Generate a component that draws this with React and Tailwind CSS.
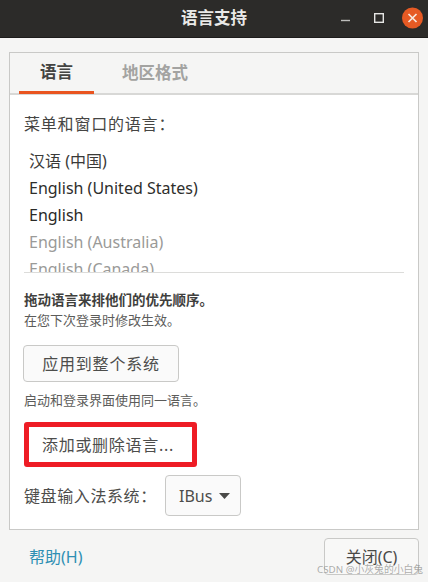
import React from 'react';

const FONT = "font-['Noto_Sans','Noto_Sans_CJK_SC',sans-serif]";

const languages = [
    { name: '汉语 (中国)', cls: 'text-[#3a3a38]' },
    { name: 'English (United States)', cls: 'text-[#2e2e2c]' },
    { name: 'English', cls: 'text-[#2a2a28]' },
    { name: 'English (Australia)', cls: 'text-[#9a9a98]' },
    { name: 'English (Canada)', cls: 'text-[#9a9a98]' },
];

const App = () => {
    return (
        <div className={`${FONT} relative w-[428px] h-[582px] overflow-hidden bg-[#f5f5f4] flex flex-col text-[#4a4a48]`}>
            {/* 타이틀바 */}
            <header className="relative h-[38px] shrink-0 bg-[#2c2b29] border-b border-[#1d1c1b] flex items-center justify-center">
                <span className="text-[16.5px] font-bold text-[#e9e9e7] leading-none">语言支持</span>
                <div className="absolute left-[332px] top-0 h-full">
                    <svg width="96" height="38" viewBox="0 0 96 38">
                        <path d="M9 20.5h9" stroke="#bdbdbb" strokeWidth="1.4" />
                        <rect x="42.7" y="13.7" width="8.6" height="8.6" fill="none" stroke="#e6e6e4" strokeWidth="1.4" />
                        <circle cx="80.5" cy="18" r="10.5" fill="#e65a24" />
                        <path d="M76.5 14l8 8M84.5 14l-8 8" stroke="#f7e9e0" strokeWidth="1.7" />
                    </svg>
                </div>
            </header>

            {/* 노트북 프레임 */}
            <div className="mt-[14px] ml-[9px] w-[410px] h-[478px] shrink-0 border border-[#c9c9c7] bg-white flex flex-col">
                <div className="h-[42px] shrink-0 bg-[#f5f5f4] border-b-[2px] border-[#d8d8d6] flex pl-[9px]">
                    <div className="w-[75px] h-[41px] border-b-[3px] border-[#e9541f] flex items-center justify-center text-[16.5px] font-bold text-[#444442]">
                        语言
                    </div>
                    <div className="ml-[28px] h-[40px] flex items-center text-[16.5px] font-bold text-[#a3a3a1]">
                        地区格式
                    </div>
                </div>

                <div className="flex-1 flex flex-col pl-[13px]">
                    <div className="mt-[17px] ml-[1px] h-[24px] flex items-center text-[16px] tracking-[0.8px] text-[#454543]">
                        菜单和窗口的语言：
                    </div>

                    <div className="mt-[11px] ml-[1px] w-[380px] h-[126px] overflow-hidden border-b-[1.5px] border-[#dcdcda] pl-[5px]">
                        {languages.map((lang, i) => (
                            <div key={i} className={`h-[27px] flex items-center whitespace-nowrap text-[16px] ${lang.cls}`}>
                                {lang.name}
                            </div>
                        ))}
                    </div>

                    <div className="mt-[17px] ml-[1px] h-[20px] flex items-center whitespace-nowrap text-[13.5px] font-bold text-[#3f3f3d]">
                        拖动语言来排他们的优先顺序。
                    </div>
                    <div className="mt-[1px] ml-[1px] h-[20px] flex items-center whitespace-nowrap text-[13px] text-[#5c5c5a]">
                        在您下次登录时修改生效。
                    </div>

                    <button className="mt-[14px] w-[156px] h-[37px] rounded-[4px] border border-[#c9c9c7] bg-[#fafafa] text-[16px] tracking-[0.8px] text-[#4d4d4b] flex items-center justify-center">
                        应用到整个系统
                    </button>

                    <div className="mt-[9px] ml-[1px] h-[20px] flex items-center whitespace-nowrap text-[13px] text-[#5c5c5a]">
                        启动和登录界面使用同一语言。
                    </div>

                    {/* 빨간 강조 박스 */}
                    <div className="mt-[11px] ml-[1px] w-[173px] h-[45px] rounded-[3px] border-[5px] border-[#ee1c25] bg-white flex items-center pl-[13px] text-[16px] tracking-[0.7px] text-[#4d4d4b]">
                        添加或删除语言...
                    </div>

                    <div className="mt-[8px] flex items-center">
                        <span className="ml-[1px] w-[141px] text-[16px] tracking-[0.6px] text-[#4d4d4b]">键盘输入法系统：</span>
                        <div className="w-[76px] h-[41px] rounded-[4px] border border-[#c9c9c7] bg-[#fafafa] flex items-center pl-[13px] gap-[7px] text-[16px] text-[#4d4d4b]">
                            IBus
                            <svg width="11" height="6" viewBox="0 0 11 6">
                                <path d="M0 0h11L5.5 6z" fill="#4a4a48" />
                            </svg>
                        </div>
                    </div>
                </div>
            </div>

            {/* 하단 */}
            <footer className="mt-[8px] ml-[29px] mr-[9px] flex items-center justify-between">
                <span className="text-[16px] text-[#2f8fb3]">帮助(H)</span>
                <button className="w-[95px] h-[37px] rounded-[4px] border border-[#c9c9c7] bg-[#f8f8f7] text-[16px] text-[#4a4a48] flex items-center justify-center">
                    关闭(C)
                </button>
            </footer>

            {/* 워터마크 */}
            <span className="absolute left-[317px] top-[562px] text-[9.8px] leading-[16px] whitespace-nowrap text-[#8a8a88]/70">
                CSDN @小灰兔的小白兔
            </span>
        </div>
    );
};

export default App;
